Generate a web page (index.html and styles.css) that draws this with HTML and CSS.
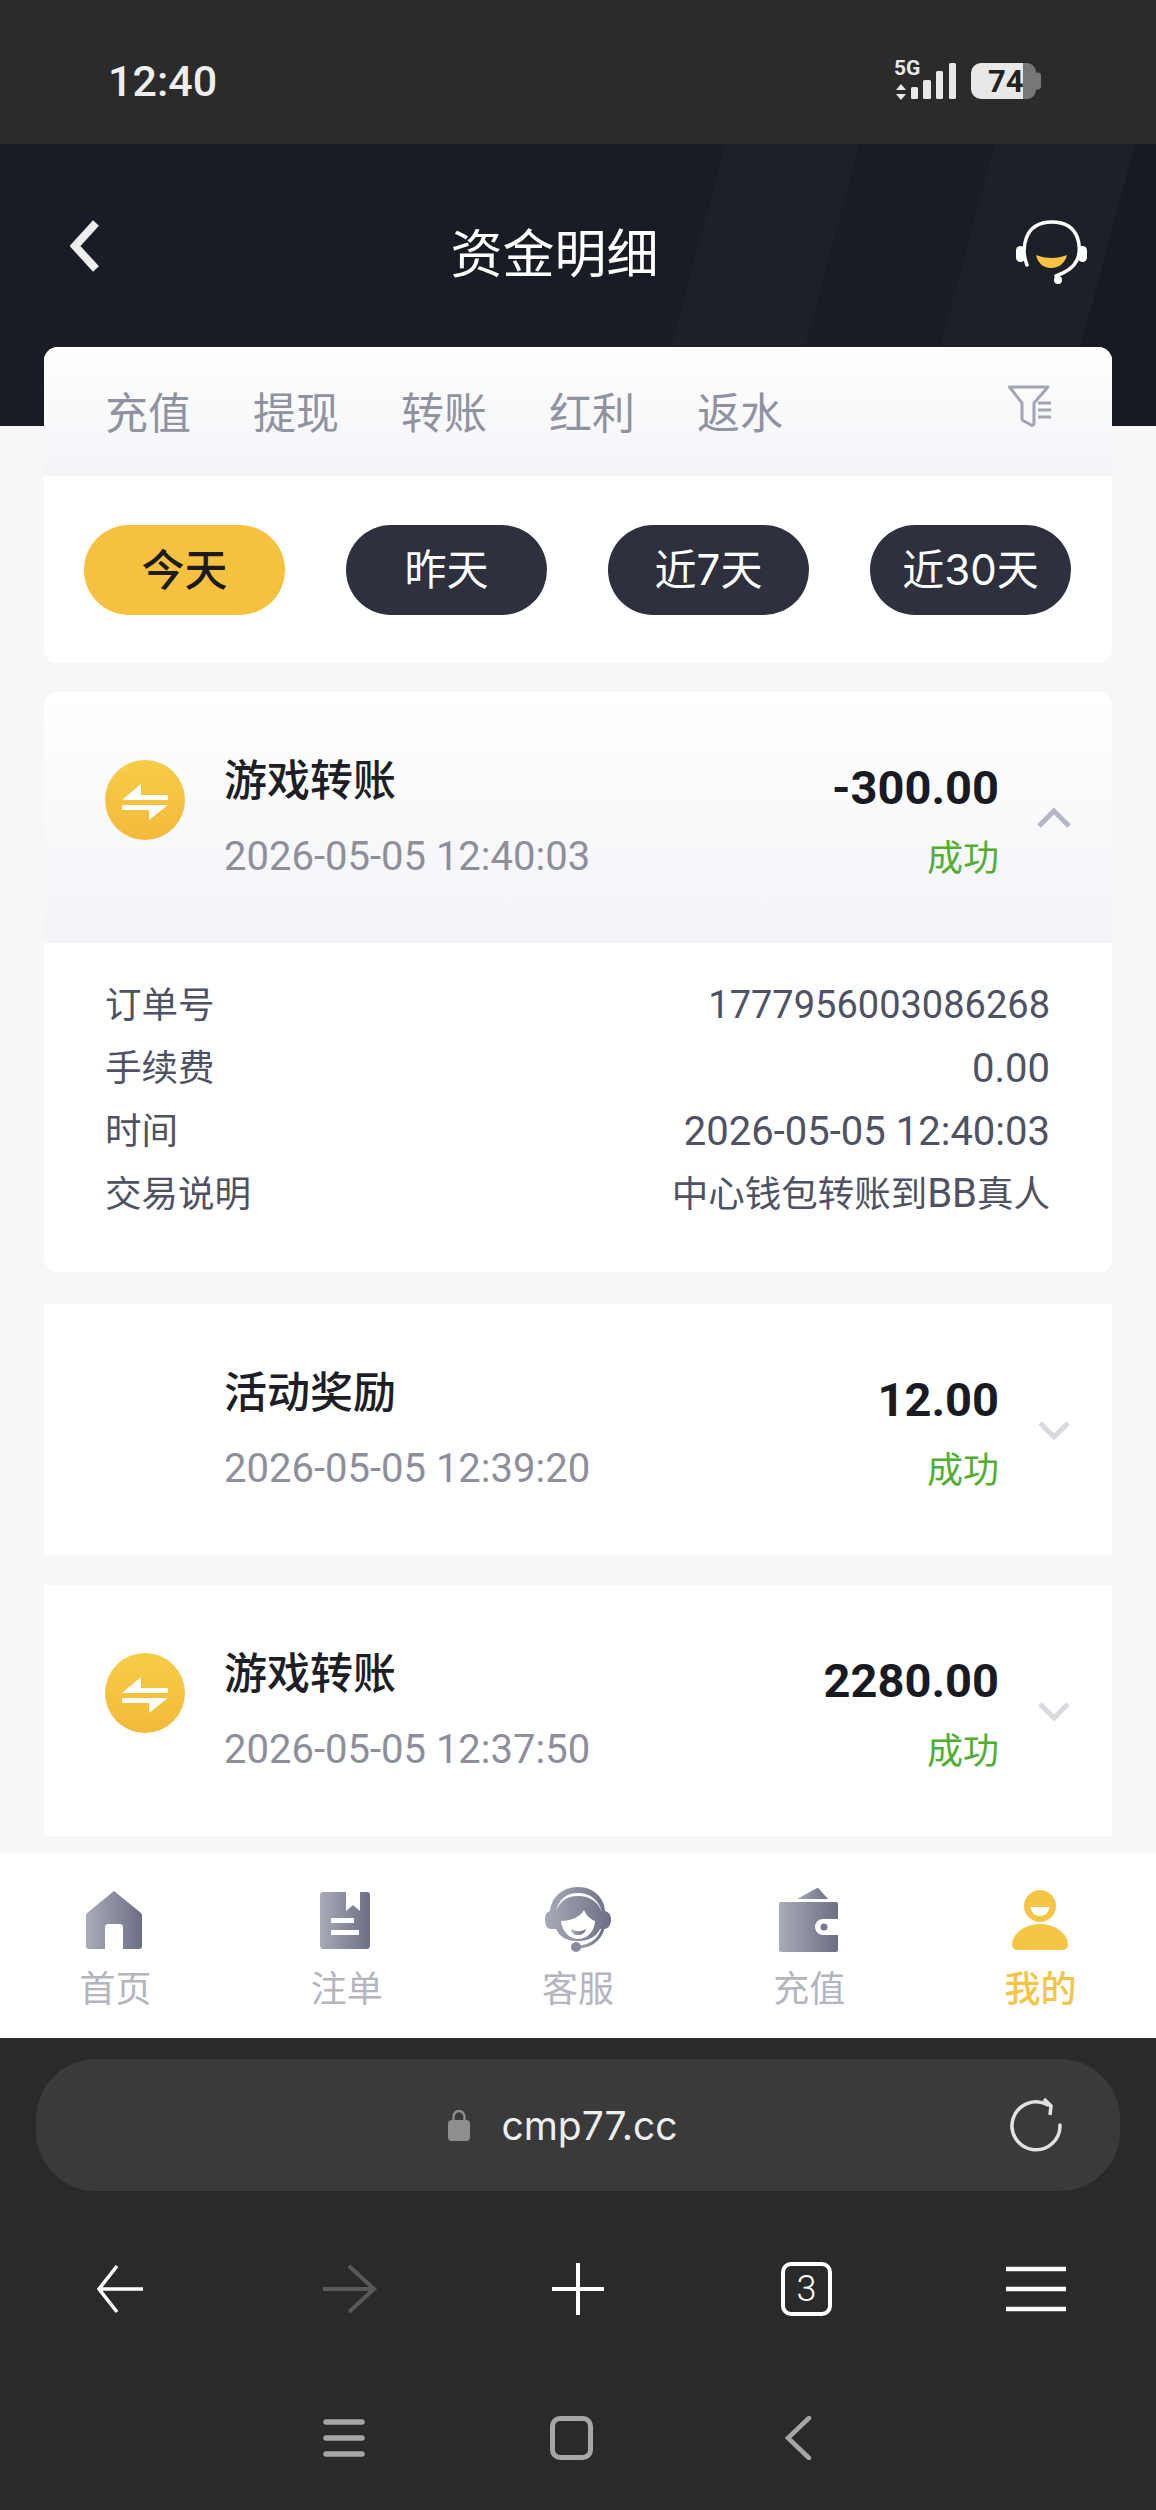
FILE: index.html
```html
<!DOCTYPE html>
<html lang="zh-CN">
<head>
  <meta charset="UTF-8" />
  <meta name="viewport" content="width=device-width, initial-scale=1.0"/>
  <title>资金明细</title>
  <link rel="stylesheet" href="styles.css">
</head>
<body>
  <div class="phone">
    <div class="status-bar">
      <span class="clock">12:40</span>
      <svg class="status-icons" viewBox="0 -8 150 52" width="150" height="52">
        <text x="1" y="16" class="net-text">5G</text>
        <path d="M8 25l5 6H3zM8 41l5-6H3z" fill="#e8e8e8"/>
        <rect x="18" y="28" width="7" height="12" rx="1.5" fill="#e8e8e8"/>
        <rect x="30" y="21" width="8" height="19" rx="1.5" fill="#e8e8e8"/>
        <rect x="43" y="12" width="7" height="28" rx="1.5" fill="#e8e8e8"/>
        <rect x="56" y="4" width="7" height="36" rx="1.5" fill="#e8e8e8"/>
        <path d="M120 4h14a9 9 0 0 1 9 9v.5h2a3 3 0 0 1 3 3v11a3 3 0 0 1-3 3h-2v.5a9 9 0 0 1-9 9h-14z" fill="#777"/>
        <path d="M88 4h42v36H88a10 10 0 0 1-10-10V14a10 10 0 0 1 10-10z" fill="#e8e8e8"/>
        <text x="95" y="33" class="batt-text">74</text>
      </svg>
    </div>

    <div class="page">
      <div class="header">
        <svg class="back-icon" viewBox="0 0 30 52" width="30" height="52">
          <path d="M26 3L5 26l21 23" fill="none" stroke="#eee" stroke-width="8"/>
        </svg>
        <h1 class="title">资金明细</h1>
        <svg class="service-icon" viewBox="0 0 71 64" width="71" height="64">
          <path d="M11 45C5 30 7 2 36 2c29 0 30 28 25 38-3 7-10 12-21 16" fill="none" stroke="#fff" stroke-width="3.5" stroke-linecap="round"/>
          <rect x="0" y="26" width="9" height="16" rx="4.5" fill="#fff"/>
          <rect x="62" y="26" width="9" height="16" rx="4.5" fill="#fff"/>
          <circle cx="42" cy="60" r="4" fill="#fff"/>
          <path d="M20 35c10 4 21 4 31 0-2 9-9 13-16 13s-13-4-15-13z" fill="#f5c243"/>
        </svg>
      </div>

      <div class="filter-card">
        <div class="type-tabs">
          <span class="type-tab">充值</span>
          <span class="type-tab">提现</span>
          <span class="type-tab">转账</span>
          <span class="type-tab">红利</span>
          <span class="type-tab">返水</span>
          <svg class="filter-icon" viewBox="0 0 45 42" width="45" height="42">
            <path d="M2.500 2H41L27 18V38a2 2 0 0 1-3 2l-7-4a3 3 0 0 1-2-3V18Z" fill="none" stroke="#a3a5b4" stroke-width="3" stroke-linejoin="round"/>
            <path d="M31 18h13M31 25h13M31 32h13" stroke="#a3a5b4" stroke-width="3"/>
          </svg>
        </div>
        <div class="date-pills">
          <span class="pill active">今天</span>
          <span class="pill">昨天</span>
          <span class="pill">近7天</span>
          <span class="pill">近30天</span>
        </div>
      </div>

      <div class="tx-card">
        <div class="tx-head open">
          <div class="tx-icon">
            <svg viewBox="0 0 80 80" width="80" height="80">
              <defs>
                <linearGradient id="coinGrad" x1="0" y1="0" x2="0" y2="1">
                  <stop offset="0" stop-color="#f6cd48"/>
                  <stop offset="1" stop-color="#f4b93a"/>
                </linearGradient>
              </defs>
              <circle cx="40" cy="40" r="40" fill="url(#coinGrad)"/>
              <path class="swap" d="M36 24v11h27v5H17zM17 45h46L44 60V50H17z"/>
            </svg>
          </div>
          <div class="tx-info">
            <div class="tx-name">游戏转账</div>
            <div class="tx-time">2026-05-05 12:40:03</div>
          </div>
          <div class="tx-amount">
            <div class="amount">-300.00</div>
            <div class="state">成功</div>
          </div>
          <svg class="chevron" viewBox="0 0 36 24" width="36" height="24">
            <path d="M3 20L18 5l15 15" fill="none" stroke="#b5b7c6" stroke-width="5"/>
          </svg>
        </div>
        <div class="tx-detail">
          <div class="detail-row"><span>订单号</span><span class="num order-no">1777956003086268</span></div>
          <div class="detail-row"><span>手续费</span><span class="num">0.00</span></div>
          <div class="detail-row"><span>时间</span><span class="num">2026-05-05 12:40:03</span></div>
          <div class="detail-row"><span>交易说明</span><span>中心钱包转账到<span class="num">BB</span>真人</span></div>
        </div>
      </div>

      <div class="tx-card square">
        <div class="tx-head">
          <div class="tx-icon"></div>
          <div class="tx-info">
            <div class="tx-name">活动奖励</div>
            <div class="tx-time">2026-05-05 12:39:20</div>
          </div>
          <div class="tx-amount">
            <div class="amount">12.00</div>
            <div class="state">成功</div>
          </div>
          <svg class="chevron" viewBox="0 0 36 24" width="36" height="24">
            <path d="M4 5l14 14L32 5" fill="none" stroke="#d8d9e1" stroke-width="5"/>
          </svg>
        </div>
      </div>

      <div class="tx-card square last">
        <div class="tx-head">
          <div class="tx-icon">
            <svg viewBox="0 0 80 80" width="80" height="80">
              <circle cx="40" cy="40" r="40" fill="url(#coinGrad)"/>
              <path class="swap" d="M36 24v11h27v5H17zM17 45h46L44 60V50H17z"/>
            </svg>
          </div>
          <div class="tx-info">
            <div class="tx-name">游戏转账</div>
            <div class="tx-time">2026-05-05 12:37:50</div>
          </div>
          <div class="tx-amount">
            <div class="amount">2280.00</div>
            <div class="state">成功</div>
          </div>
          <svg class="chevron" viewBox="0 0 36 24" width="36" height="24">
            <path d="M4 5l14 14L32 5" fill="none" stroke="#d8d9e1" stroke-width="5"/>
          </svg>
        </div>
      </div>
    </div>

    <div class="tabbar">
      <div class="tab-item">
        <svg viewBox="0 0 58 58" width="58" height="58">
          <defs>
            <linearGradient id="navGrad" x1="0" y1="0" x2="1" y2="0">
              <stop offset="0" stop-color="#a9abb8"/>
              <stop offset="1" stop-color="#6c6f84"/>
            </linearGradient>
          </defs>
          <path fill="url(#navGrad)" d="M29 0L56 22Q57 23 57 25V55Q57 58 54 58H38V36Q38 33 35 33H23Q20 33 20 36V58H4Q1 58 1 55V25Q1 23 2 22Z"/>
        </svg>
        <span>首页</span>
      </div>
      <div class="tab-item">
        <svg viewBox="0 0 50 58" width="50" height="58">
          <path fill="url(#navGrad)" d="M3 1H26V20L33 14L40 20V1H47Q50 1 50 4V54Q50 58 47 58H3Q0 58 0 54V4Q0 1 3 1Z"/>
          <rect x="11" y="27" width="23" height="5" fill="#fff"/>
          <rect x="11" y="39" width="28" height="5" fill="#fff"/>
        </svg>
        <span>注单</span>
      </div>
      <div class="tab-item">
        <svg viewBox="0 0 66 66" width="66" height="66">
          <path fill="url(#navGrad)" d="M33 0C16 0 6 12 5 24 1 25 0 28 0 33s2 9 6 9h5c3 6 8 12 22 12 13 0 19-6 22-12h4c4 0 7-4 7-9s-2-8-6-9C59 12 50 0 33 0z"/>
          <path d="M11 25C13 13 21 6 33 6s21 7 24 19C53 15 45 9 33 9S14 15 11 25z" fill="#fff"/>
          <path d="M16 34c10 0 19-4 23-11 2 5 6 9 11 11 0 9-7 18-17 18-9 0-16-8-17-18z" fill="#fff"/>
          <path d="M26 42c5 3 10 3 15 0-1 4-4 6-8 6s-6-2-7-6z" fill="url(#navGrad)"/>
          <path d="M31 60c12 0 22-4 27-18" fill="none" stroke="url(#navGrad)" stroke-width="3"/>
          <circle cx="31" cy="60" r="5" fill="#8a8c9e"/>
        </svg>
        <span>客服</span>
      </div>
      <div class="tab-item">
        <svg viewBox="0 0 60 64" width="60" height="64">
          <path fill="url(#navGrad)" d="M18 11L38 0Q40 0 41 2L49 11Z"/>
          <path fill="url(#navGrad)" d="M2 14H57Q59 14 59 16V31H44A8 8 0 0 0 44 47H59V62Q59 64 57 64H2Q0 64 0 62V16Q0 14 2 14Z"/>
          <circle cx="45" cy="39" r="3.500" fill="#777a8e"/>
        </svg>
        <span>充值</span>
      </div>
      <div class="tab-item active">
        <svg viewBox="0 0 56 60" width="56" height="60">
          <ellipse cx="28" cy="16" rx="16" ry="16" fill="#f5c645"/>
          <path d="M18.500 17H37.500Q36 26 28 26Q20 26 18.500 17Z" fill="#fff"/>
          <path d="M28 34C44 34 56 44 56 55Q56 60 50 60H6Q0 60 0 55C0 44 12 34 28 34Z" fill="#f5c645"/>
        </svg>
        <span>我的</span>
      </div>
    </div>

    <div class="browser">
      <div class="url-bar">
        <div class="url-text">
          <svg viewBox="0 0 24 32" width="22" height="32" preserveAspectRatio="none">
            <path d="M6 13V8a6 6 0 0 1 12 0v5" fill="none" stroke="#8e8e8e" stroke-width="2.500"/>
            <rect x="0" y="11" width="24" height="21" rx="4" fill="#8e8e8e"/>
          </svg>
          <span>cmp77.cc</span>
        </div>
        <svg class="reload" viewBox="0 0 56 56" width="56" height="56">
          <path d="M40 8A24 24 0 1 0 52 28" fill="none" stroke="#e2e2e2" stroke-width="3.500" stroke-linecap="round"/>
          <path d="M36 2l7 7-1 9" fill="none" stroke="#e2e2e2" stroke-width="3.500"/>
        </svg>
      </div>
      <div class="toolbar">
        <svg viewBox="0 0 50 50" width="50" height="50">
          <path d="M22 2L4 25l18 23M4 25h44" fill="none" stroke="#fff" stroke-width="3.500"/>
        </svg>
        <svg viewBox="0 0 56 50" width="56" height="50">
          <path d="M28 2l25 23-25 23M2 25h50" fill="none" stroke="#595959" stroke-width="4"/>
        </svg>
        <svg viewBox="0 0 54 54" width="54" height="54">
          <path d="M27 1v52M1 27h52" fill="none" stroke="#fff" stroke-width="4"/>
        </svg>
        <div class="tab-count"><span>3</span></div>
        <svg viewBox="0 0 60 46" width="60" height="46">
          <path d="M0 3h60M0 23h60M0 43h60" stroke="#fff" stroke-width="4.500"/>
        </svg>
      </div>
      <div class="system-nav">
        <svg viewBox="0 0 42 40" width="42" height="40">
          <path d="M3 4h36M3 20h36M3 36h36" stroke="#a6a6a6" stroke-width="5.500" stroke-linecap="round"/>
        </svg>
        <div class="home-key"></div>
        <svg viewBox="0 0 30 44" width="30" height="44">
          <path d="M26 2L5 22l21 20" fill="none" stroke="#a6a6a6" stroke-width="4.500" stroke-linecap="round"/>
        </svg>
      </div>
    </div>
  </div>
</body>
</html>
```

FILE: styles.css
```css
* {
  box-sizing: border-box;
}

html, body {
  margin: 0;
  padding: 0;
}

body {
  width: 1156px;
  height: 2510px;
  overflow: hidden;
  font-family: Inter, "Noto Sans CJK SC", sans-serif;
  background: #f7f7f7;
}

svg {
  display: block;
}

.phone {
  display: flex;
  flex-direction: column;
  height: 2510px;
}

/* status bar */
.status-bar {
  height: 144px;
  flex: none;
  display: flex;
  align-items: center;
  justify-content: space-between;
  padding: 18px 113px 0 108px;
  background: #2b2b2b;
}

.clock {
  font-family: Roboto, sans-serif;
  font-weight: 500;
  font-size: 43px;
  color: #eee;
}

.status-icons {
  margin-bottom: 8px;
}

.net-text {
  font-family: Roboto, sans-serif;
  font-weight: 700;
  font-size: 21px;
  fill: #e8e8e8;
}

.batt-text {
  font-family: Roboto, sans-serif;
  font-weight: 700;
  font-size: 31px;
  fill: #222;
}

/* page body */
.page {
  flex: 1;
  overflow: hidden;
  display: flex;
  flex-direction: column;
}

.header {
  height: 282px;
  flex: none;
  display: flex;
  align-items: center;
  align-self: stretch;
  padding: 0 69px 66px 70px;
  background: linear-gradient(105deg, #191c25 701px, #1e2029 701px, #1e2029 830px, #191c25 830px, #191c25 961px, #1e2029 961px, #1e2029 1096px, #171a23 1096px);
}

.back-icon {
  margin-bottom: 12px;
}

.title {
  flex: 1;
  margin: 0 0 2px;
  padding-right: 7px;
  text-align: center;
  font-family: "Noto Sans CJK SC", sans-serif;
  font-weight: 400;
  font-size: 52px;
  line-height: 64px;
  color: #fff;
}

.filter-card {
  flex: none;
  margin: -79px 44px 0;
  background: #fff;
  border-radius: 14px;
  overflow: hidden;
  height: 316px;
}

.type-tabs {
  height: 129px;
  display: flex;
  align-items: center;
  gap: 62px;
  padding: 0 60px 4px 61px;
  background: linear-gradient(#fff, #f3f4f8);
}

.type-tab {
  font-family: "Noto Sans CJK SC", sans-serif;
  font-size: 43px;
  color: #9092a0;
}

.filter-icon {
  margin-left: auto;
  margin-bottom: 8px;
}

.date-pills {
  display: flex;
  justify-content: space-between;
  padding: 49px 41px 0 40px;
}

.pill {
  width: 201px;
  height: 90px;
  line-height: 90px;
  border-radius: 45px;
  background: #2e303e;
  color: #fff;
  text-align: center;
  font-size: 42px;
}

.pill.active {
  background: #f6c13e;
  color: #1b1b1f;
  font-weight: 500;
  font-size: 43px;
}

/* transaction cards */
.tx-card {
  flex: none;
  margin: 29px 44px 0;
  background: #fff;
  border-radius: 14px;
  overflow: hidden;
}

.tx-card.square {
  border-radius: 0;
  margin-top: 32px;
}

.tx-card.last {
  margin-top: 30px;
}

.tx-head {
  height: 251px;
  display: flex;
  align-items: center;
  padding: 0 40px 0 61px;
}

.tx-head.open {
  background: linear-gradient(#fff, #f3f4f8);
}

.tx-icon {
  width: 80px;
  height: 80px;
  flex: none;
  margin: 0 39px 35px 0;
}

.swap {
  fill: #fff;
}

.tx-info {
  flex: 1;
  margin-top: 2px;
}

.tx-name {
  margin-top: -3px;
  font-family: "Noto Sans CJK SC", sans-serif;
  font-weight: 500;
  font-size: 43px;
  line-height: 56px;
  color: #1d1e26;
}

.tx-time {
  margin-top: 24px;
  font-family: Roboto, sans-serif;
  font-size: 40px;
  line-height: 56px;
  color: #8e8f9b;
}

.tx-amount {
  text-align: right;
  margin-top: 8px;
}

.amount {
  font-family: Roboto, sans-serif;
  font-weight: 700;
  font-size: 47px;
  line-height: 56px;
  color: #1a1b22;
}

.state {
  margin-top: 11px;
  font-family: "Noto Sans CJK SC", sans-serif;
  font-size: 36px;
  line-height: 56px;
  color: #52ae30;
}

.chevron {
  flex: none;
  margin-left: 37px;
}

.tx-detail {
  padding: 31px 62px 46px 61px;
}

.detail-row {
  display: flex;
  justify-content: space-between;
  height: 63px;
  font-family: "Noto Sans CJK SC", sans-serif;
  font-size: 36.5px;
  color: #4f5262;
}

.detail-row > span {
  line-height: 58px;
}

.num {
  font-family: Roboto, sans-serif;
  font-size: 40px;
}

.detail-row > .num {
  line-height: 63px;
}

.num.order-no {
  font-size: 38px;
}

/* bottom tabs */
.tabbar {
  height: 185px;
  flex: none;
  display: grid;
  grid-template-columns: repeat(5, 1fr);
  background: #fff;
}

.tab-item {
  display: flex;
  flex-direction: column;
  align-items: center;
  padding-top: 34px;
  font-family: "Noto Sans CJK SC", sans-serif;
  font-size: 36px;
  color: #b4b5bf;
}

.tab-item svg {
  height: 66px;
}

.tab-item:nth-child(-n+2) svg {
  margin-right: 3px;
}

.tab-item span {
  margin-top: 8px;
  line-height: 50px;
}

.tab-item.active {
  color: #f5c645;
  font-weight: 500;
}

/* browser chrome */
.browser {
  height: 472px;
  flex: none;
  background: #2a2a2a;
}

.url-bar {
  height: 132px;
  margin: 21px 36px 0;
  padding-right: 30px;
  display: flex;
  align-items: center;
  justify-content: center;
  border-radius: 60px;
  background: #3a3a3a;
  position: relative;
}

.url-text {
  display: flex;
  align-items: center;
  gap: 31px;
  font-size: 39px;
  color: #eee;
}

.reload {
  position: absolute;
  right: 56px;
  top: 38px;
}

.toolbar {
  display: grid;
  grid-template-columns: repeat(5, 229px);
  justify-items: center;
  align-items: center;
  padding: 71px 0 0 5px;
}

.tab-count {
  width: 51px;
  height: 54px;
  border: 4px solid #fff;
  border-radius: 10px;
  display: flex;
  align-items: center;
  justify-content: center;
  font-family: Roboto, sans-serif;
  font-weight: 300;
  font-size: 36px;
  color: #fff;
}

.system-nav {
  display: flex;
  justify-content: center;
  align-items: center;
  gap: 190px;
  padding: 100px 20px 0 0;
}

.home-key {
  width: 43px;
  height: 44px;
  margin-left: -5px;
  border: 5px solid #a6a6a6;
  border-radius: 10px;
}
```
